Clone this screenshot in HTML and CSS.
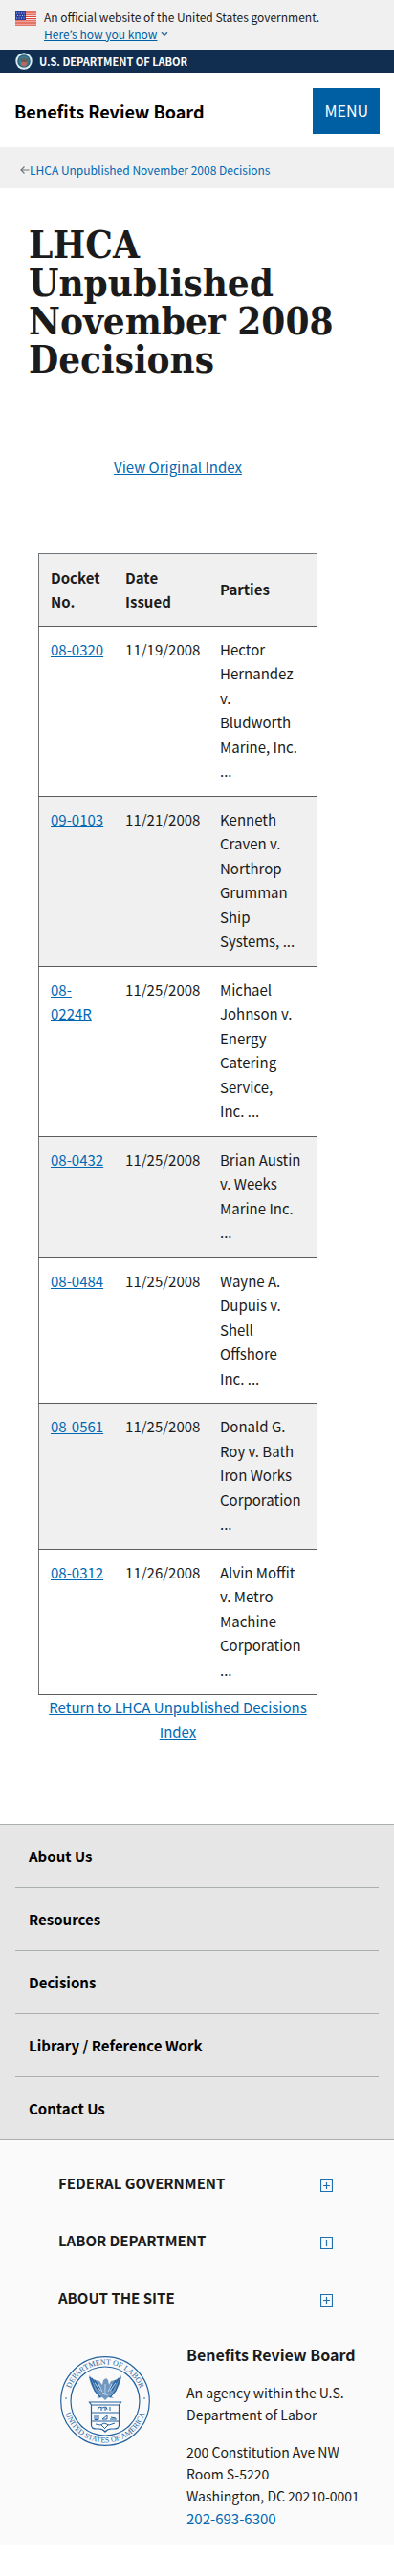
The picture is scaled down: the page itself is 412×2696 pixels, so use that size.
FILE: index.html
```html
<!DOCTYPE html>
<html lang="en">
<head>
<meta charset="utf-8">
<meta name="viewport" content="width=device-width, initial-scale=1">
<title>LHCA Unpublished November 2008 Decisions</title>
<link rel="stylesheet" href="styles.css">
</head>
<body>
<section class="banner" aria-label="Official government website">
  <svg class="flag" viewBox="0 0 22 15" aria-hidden="true">
    <rect width="22" height="15" fill="#fff"/>
    <path d="M0 1h22M0 3.2h22M0 5.4h22M0 7.6h22M0 9.8h22M0 12h22M0 14.2h22" stroke="#dc4537" stroke-width="1.3"/>
    <rect width="11" height="9" fill="#2a3f9d"/>
    <path d="M1 2h9M2 4.5h8M1 7h9" stroke="#b9c3e8" stroke-width="1" stroke-dasharray="1 1.5"/>
  </svg>
  <div>
    <p>An official website of the United States government.</p>
    <button type="button" class="know"><span>Here’s how you know</span>
      <svg viewBox="0 0 8 6" aria-hidden="true"><path d="M1 1.2l3 3 3-3" fill="none" stroke="#3a6f9f" stroke-width="1.6"/></svg>
    </button>
  </div>
</section>
<div class="dept">
  <svg viewBox="0 0 18 18" aria-hidden="true">
    <circle cx="9" cy="9" r="8.7" fill="#d8ecf2"/>
    <circle cx="9" cy="9" r="6.8" fill="#2b5f7c"/>
    <circle cx="9" cy="9" r="5.5" fill="#397b91"/>
    <path d="M5 6l3 1 1-2 2 2 3-1-2 4H7z" fill="#675d58"/>
    <path d="M6 10h6v3l-3 2-3-2z" fill="#b6695e"/>
  </svg>
  <a href="#">U.S. DEPARTMENT OF LABOR</a>
</div>
<header class="header">
  <a class="site" href="#">Benefits Review Board</a>
  <button type="button" class="menu">MENU</button>
</header>
<nav class="crumb" aria-label="Breadcrumb">
  <svg viewBox="0 0 10 10" aria-hidden="true"><path d="M9.500 5H1.500M4.500 1.500L1 5l3.500 3.500" fill="none" stroke="#71767a" stroke-width="1.200"/></svg>
  <a href="#">LHCA Unpublished November 2008 Decisions</a>
</nav>
<main class="main">
  <h1>LHCA Unpublished November 2008 Decisions</h1>
  <div class="content">
    <p class="original"><a href="#">View Original Index</a></p>
    <table>
      <colgroup><col class="c-docket"><col class="c-date"><col class="c-parties"></colgroup>
      <thead><tr><th scope="col">Docket No.</th><th scope="col">Date Issued</th><th scope="col">Parties</th></tr></thead>
      <tbody>
        <tr><td><a href="#">08-0320</a></td><td>11/19/2008</td><td>Hector Hernandez<br>v.<br>Bludworth Marine, Inc. ...</td></tr>
        <tr><td><a href="#">09-0103</a></td><td>11/21/2008</td><td>Kenneth Craven v. Northrop Grumman Ship Systems, ...</td></tr>
        <tr><td><a href="#">08-0224R</a></td><td>11/25/2008</td><td>Michael Johnson v. Energy Catering Service,<br>Inc. ...</td></tr>
        <tr><td><a href="#">08-0432</a></td><td>11/25/2008</td><td>Brian Austin v. Weeks Marine Inc. ...</td></tr>
        <tr><td><a href="#">08-0484</a></td><td>11/25/2008</td><td>Wayne A. Dupuis v. Shell Offshore<br>Inc. ...</td></tr>
        <tr><td><a href="#">08-0561</a></td><td>11/25/2008</td><td>Donald G. Roy v. Bath Iron Works Corporation ...</td></tr>
        <tr><td><a href="#">08-0312</a></td><td>11/26/2008</td><td>Alvin Moffit v. Metro Machine Corporation ...</td></tr>
      </tbody>
    </table>
    <p class="return"><a href="#">Return to LHCA Unpublished Decisions Index</a></p>
  </div>
</main>
<nav class="sections" aria-label="Board sections">
  <ul>
    <li><a href="#">About Us</a></li>
    <li><a href="#">Resources</a></li>
    <li><a href="#">Decisions</a></li>
    <li><a href="#">Library / Reference Work</a></li>
    <li><a href="#">Contact Us</a></li>
  </ul>
</nav>
<footer class="footer">
  <button type="button" class="fold">FEDERAL GOVERNMENT
    <svg viewBox="0 0 13 13" aria-hidden="true"><path d="M.5.5h12v12H.5zM6.500 3v7M3 6.500h7" fill="none" stroke="#2070b0" stroke-width="1.200"/></svg></button>
  <button type="button" class="fold">LABOR DEPARTMENT
    <svg viewBox="0 0 13 13" aria-hidden="true"><path d="M.5.5h12v12H.5zM6.500 3v7M3 6.500h7" fill="none" stroke="#2070b0" stroke-width="1.200"/></svg></button>
  <button type="button" class="fold">ABOUT THE SITE
    <svg viewBox="0 0 13 13" aria-hidden="true"><path d="M.5.5h12v12H.5zM6.500 3v7M3 6.500h7" fill="none" stroke="#2070b0" stroke-width="1.200"/></svg></button>
  <div class="agency">
    <svg class="seal" viewBox="0 0 94 94" role="img" aria-label="Department of Labor seal">
      <defs>
        <path id="arc-top" d="M8.500 47a38.500 38.500 0 0 1 77 0"/>
        <path id="arc-bottom" d="M3.500 47a43.500 43.500 0 0 0 87 0"/>
      </defs>
      <g fill="none" stroke="#2563a0">
        <circle cx="47" cy="47" r="46.300" stroke-width="1.200"/>
        <circle cx="47" cy="47" r="36" stroke-width="1.200"/>
        <path d="M32.500 51v21q0 4 5 4h3q4 0 6.500 3 2.500-3 6.500-3h3q5 0 5-4V51M30.500 48h33l-2 3h-29zM33 59h28M33 68h28" stroke-width="1.200"/>
        <path d="M39 56l2-3 3 1 4-1 1 3M43 54v3M47 54v3M52 53v4" stroke-width="1"/>
        <path d="M36 61.500h4v5h-4zM38 61v6M44 66l5-4v4zM52 66h7M53 64l5 1" stroke-width="1"/>
        <path d="M37 71l5 1 4-2 5 2 6-2M43 72l4 4M50 72l-3 3" stroke-width="1"/>
        <path d="M31 22l5 14 6 7M33 23l7 13M36 25l6 10M63 22l-5 14-6 7M61 23l-7 13M58 25l-6 10" stroke-width="1.400"/>
      </g>
      <path d="M30 20q4 5 11 6l3 4 1-5 3-2 2 2 1 5 2-4q7-1 11-6-1 10-6 16l-6 5 4 3-6-1-3 3-3-3-6 1 4-3-6-5q-5-6-6-16z" fill="#2563a0" fill-opacity=".65"/>
      <path d="M36 28l6 8M40 29l4 8M58 28l-6 8M54 29l-4 8M47 29v12M44 38l6 3" stroke="#d5e7f5" stroke-width=".8"/>
      <g class="seal-text">
        <text><textPath href="#arc-top" startOffset="50%">DEPARTMENT OF LABOR</textPath></text>
        <text><textPath href="#arc-bottom" startOffset="50%">UNITED STATES OF AMERICA</textPath></text>
      </g>
      <circle cx="6" cy="44" r=".8" fill="#2563a0"/><circle cx="88" cy="44" r=".8" fill="#2563a0"/>
    </svg>
    <address>
      <h2>Benefits Review Board</h2>
      <p>An agency within the U.S. Department of Labor</p>
      <p>200 Constitution Ave NW<br>Room S-5220<br>Washington, DC 20210-0001<br><a href="#">202-693-6300</a></p>
    </address>
  </div>
</footer>
</body>
</html>
```
FILE: styles.css
```css
* { box-sizing: border-box; }
body {
  margin: 0;
  color: #1b1b1b;
  background: #fff;
  font-family: "Noto Sans CJK KR", "Open Sans", sans-serif;
  font-size: 15px;
  line-height: 1.7;
}
p, h1, h2, ul { margin: 0; padding: 0; }
a { color: #0068b3; }
button { font: inherit; border: 0; background: none; cursor: pointer; }

.banner {
  display: flex;
  gap: 8px;
  padding: 9px 16px 8px;
  background: #f0f0f0;
  font-size: 12px;
  line-height: 17px;
}
.flag { width: 22px; height: 15px; margin-top: 3px; flex: none; }
.know {
  display: flex;
  align-items: center;
  gap: 4px;
  padding: 0;
  margin-top: 1px;
  color: #005ea2;
}
.know span { text-decoration: underline; }
.know svg { width: 8px; height: 6px; }

.dept {
  display: flex;
  align-items: center;
  gap: 7px;
  height: 24px;
  padding: 0 16px;
  background: #112e51;
  font-size: 11px;
  font-weight: 700;
  line-height: 24px;
}
.dept svg { width: 18px; height: 18px; }
.dept a { color: #fff; text-decoration: none; }

.header {
  display: flex;
  align-items: center;
  justify-content: space-between;
  padding: 16px 15px 14px;
}
.site { color: #000; font-size: 18px; font-weight: 700; text-decoration: none; }
.menu {
  height: 48px;
  padding: 0 12px;
  color: #fff;
  background: #005ea2;
  font-size: 16px;
}
.crumb {
  display: flex;
  align-items: center;
  padding: 12px 21px 8px;
  background: #f0f0f0;
  font-size: 12px;
  line-height: 23px;
}
.crumb svg { width: 10px; height: 10px; }
.crumb a { text-decoration: none; }

.main { padding: 39px 30px 0; }
h1 {
  font-family: "DejaVu Serif Condensed", "DejaVu Serif", serif;
  font-size: 40px;
  font-weight: 700;
  line-height: 40px;
}
.content { padding: 80px 50px 0 10px; }
.original { text-align: center; margin-bottom: 77px; }
.return { text-align: center; margin-bottom: 84px; }
table {
  width: 100%;
  table-layout: fixed;
  border-collapse: collapse;
  border: 1px solid #71767a;
}
.c-docket { width: 27%; }
.c-date { width: 34%; }
.c-parties { width: 39%; }
th, td { padding: 12px; text-align: left; vertical-align: top; }
th { vertical-align: middle; }
td { padding: 11px 12px 13px; }
td:first-child { padding-right: 8px; }
td:nth-child(2) { white-space: nowrap; }
tr { border-bottom: 1px solid #5c5c5c; }
thead tr, tbody tr:nth-child(even) { background: #f0f0f0; }

.sections {
  padding: 0 16px;
  background: #e6e6e6;
  border-top: 1px solid #a9aeb1;
  border-bottom: 1px solid #a9aeb1;
}
.sections ul { list-style: none; }
.sections li + li { border-top: 1px solid #a9aeb1; }
.sections a {
  display: block;
  padding: 20px 14px;
  color: #000;
  font-weight: 700;
  line-height: 25px;
  text-decoration: none;
}

.footer { padding: 32px 32px 16px; margin-bottom: 32px; background: #fafafa; }
.fold {
  display: flex;
  width: 100%;
  justify-content: space-between;
  align-items: center;
  padding: 0 32px 0 29px;
  margin-bottom: 35px;
  color: #1b1b1b;
  font-weight: 700;
  line-height: 25px;
}
.fold svg { width: 13px; height: 13px; margin-top: 6px; }
.agency { display: flex; gap: 38px; padding-left: 31px; }
.seal { width: 94px; height: 94px; margin-top: 14px; flex: none; }
.seal-text { font-family: "Liberation Serif", serif; font-size: 8px; fill: #2563a0; text-anchor: middle; }
address { font-style: normal; font-size: 14px; line-height: 23px; }
address h2 { font-size: 16px; line-height: 25px; }
address p { margin-top: 16px; }
address a { text-decoration: none; font-size: 15px; }
```
